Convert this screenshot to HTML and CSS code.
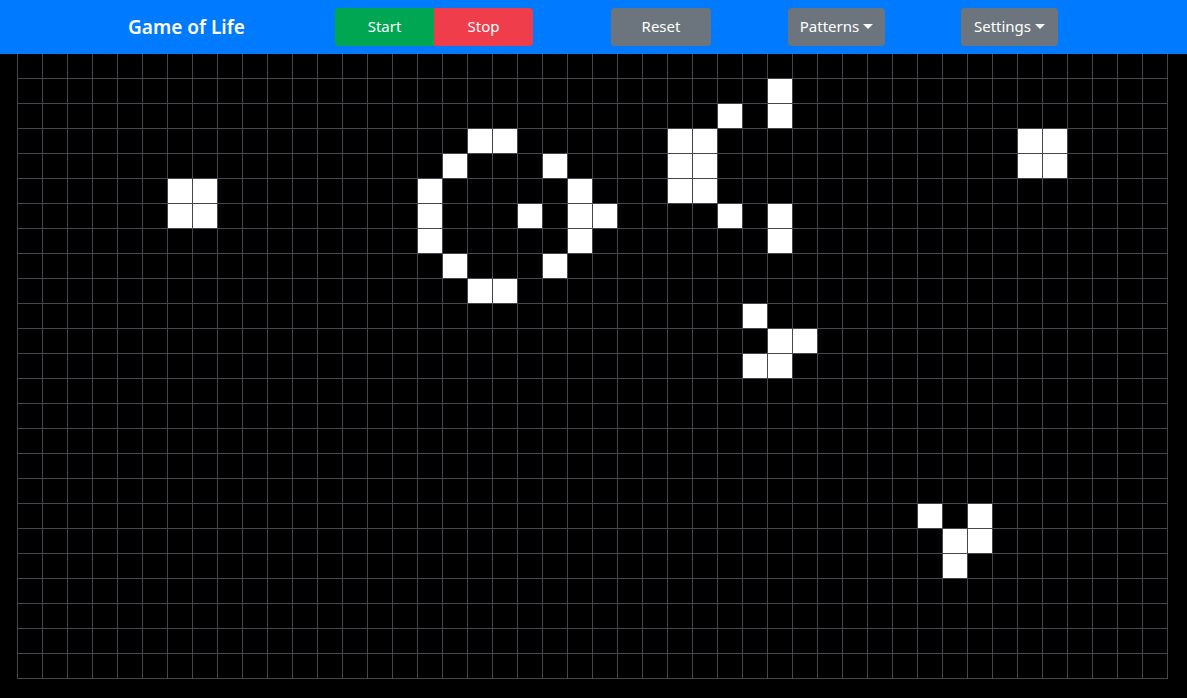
FILE: index.html
```html
<!DOCTYPE html>
<html lang="en">
<head>
<meta charset="utf-8">
<title>Game of Life</title>
<link rel="stylesheet" href="styles.css">
</head>
<body>
<nav class="navbar">
  <div class="brand">Game of Life</div>
  <div class="btn-group">
    <button class="btn btn-start">Start</button>
    <button class="btn btn-stop">Stop</button>
  </div>
  <button class="btn btn-gray btn-reset">Reset</button>
  <button class="btn btn-gray btn-drop dropdown-toggle">Patterns</button>
  <button class="btn btn-gray btn-drop dropdown-toggle">Settings</button>
</nav>
<main class="board">
  <div class="grid">
    <div class="cell" style="grid-row:6;grid-column:7"></div>
    <div class="cell" style="grid-row:6;grid-column:8"></div>
    <div class="cell" style="grid-row:7;grid-column:7"></div>
    <div class="cell" style="grid-row:7;grid-column:8"></div>

    <div class="cell" style="grid-row:4;grid-column:19"></div>
    <div class="cell" style="grid-row:4;grid-column:20"></div>
    <div class="cell" style="grid-row:5;grid-column:18"></div>
    <div class="cell" style="grid-row:5;grid-column:22"></div>
    <div class="cell" style="grid-row:6;grid-column:17"></div>
    <div class="cell" style="grid-row:6;grid-column:23"></div>
    <div class="cell" style="grid-row:7;grid-column:17"></div>
    <div class="cell" style="grid-row:7;grid-column:21"></div>
    <div class="cell" style="grid-row:7;grid-column:23"></div>
    <div class="cell" style="grid-row:7;grid-column:24"></div>
    <div class="cell" style="grid-row:8;grid-column:17"></div>
    <div class="cell" style="grid-row:8;grid-column:23"></div>
    <div class="cell" style="grid-row:9;grid-column:18"></div>
    <div class="cell" style="grid-row:9;grid-column:22"></div>
    <div class="cell" style="grid-row:10;grid-column:19"></div>
    <div class="cell" style="grid-row:10;grid-column:20"></div>

    <div class="cell" style="grid-row:2;grid-column:31"></div>
    <div class="cell" style="grid-row:3;grid-column:29"></div>
    <div class="cell" style="grid-row:3;grid-column:31"></div>
    <div class="cell" style="grid-row:4;grid-column:27"></div>
    <div class="cell" style="grid-row:4;grid-column:28"></div>
    <div class="cell" style="grid-row:5;grid-column:27"></div>
    <div class="cell" style="grid-row:5;grid-column:28"></div>
    <div class="cell" style="grid-row:6;grid-column:27"></div>
    <div class="cell" style="grid-row:6;grid-column:28"></div>
    <div class="cell" style="grid-row:7;grid-column:29"></div>
    <div class="cell" style="grid-row:7;grid-column:31"></div>
    <div class="cell" style="grid-row:8;grid-column:31"></div>

    <div class="cell" style="grid-row:4;grid-column:41"></div>
    <div class="cell" style="grid-row:4;grid-column:42"></div>
    <div class="cell" style="grid-row:5;grid-column:41"></div>
    <div class="cell" style="grid-row:5;grid-column:42"></div>

    <div class="cell" style="grid-row:11;grid-column:30"></div>
    <div class="cell" style="grid-row:12;grid-column:31"></div>
    <div class="cell" style="grid-row:12;grid-column:32"></div>
    <div class="cell" style="grid-row:13;grid-column:30"></div>
    <div class="cell" style="grid-row:13;grid-column:31"></div>

    <div class="cell" style="grid-row:19;grid-column:37"></div>
    <div class="cell" style="grid-row:19;grid-column:39"></div>
    <div class="cell" style="grid-row:20;grid-column:38"></div>
    <div class="cell" style="grid-row:20;grid-column:39"></div>
    <div class="cell" style="grid-row:21;grid-column:38"></div>
  </div>
</main>
</body>
</html>
```

FILE: styles.css
```css
* { box-sizing: border-box; }

html, body {
  margin: 0;
  padding: 0;
  background: #000;
}

body {
  font-family: "Noto Sans", "Open Sans", Arial, sans-serif;
  font-size: 16px;
  color: #fff;
}

.navbar {
  display: flex;
  align-items: center;
  height: 54px;
  padding-left: 128px;
  background: #007bff;
}

.brand {
  width: 207px;
  font-size: 19px;
  font-weight: 600;
  color: #fff;
  white-space: nowrap;
  padding-bottom: 1px;
}

.btn-group {
  display: flex;
}

.btn {
  height: 38px;
  border: 0;
  padding: 0 0 2px 0;
  font-family: inherit;
  font-size: 15px;
  color: #fff;
  border-radius: 4px;
  display: inline-flex;
  align-items: center;
  justify-content: center;
  cursor: pointer;
}

.btn-start {
  width: 99px;
  background: #00a651;
  border-radius: 4px 0 0 4px;
}

.btn-stop {
  width: 99px;
  background: #ef3d4c;
  border-radius: 0 4px 4px 0;
}

.btn-gray {
  background: #6c757d;
}

.btn-reset {
  width: 100px;
  margin-left: 78px;
}

.btn-drop {
  width: 97px;
  margin-left: 77px;
}

.btn-drop + .btn-drop {
  margin-left: 76px;
}

.dropdown-toggle::after {
  content: "";
  display: inline-block;
  margin-left: 4px;
  margin-top: 1px;
  border-top: 5px solid #fff;
  border-left: 5px solid transparent;
  border-right: 5px solid transparent;
}

.board {
  display: flex;
  padding-left: 17px;
}

.grid {
  display: grid;
  grid-template-columns: repeat(46, 25px);
  grid-template-rows: repeat(25, 25px);
  width: 1151px;
  border-left: 1px solid #43484e;
  background-color: #000;
  background-image:
    repeating-linear-gradient(to right, transparent 0 24px, #43484e 24px 25px),
    repeating-linear-gradient(to bottom, transparent 0 24px, #43484e 24px 25px);
}

.cell {
  width: 24px;
  height: 24px;
  background: #fff;
}
```
